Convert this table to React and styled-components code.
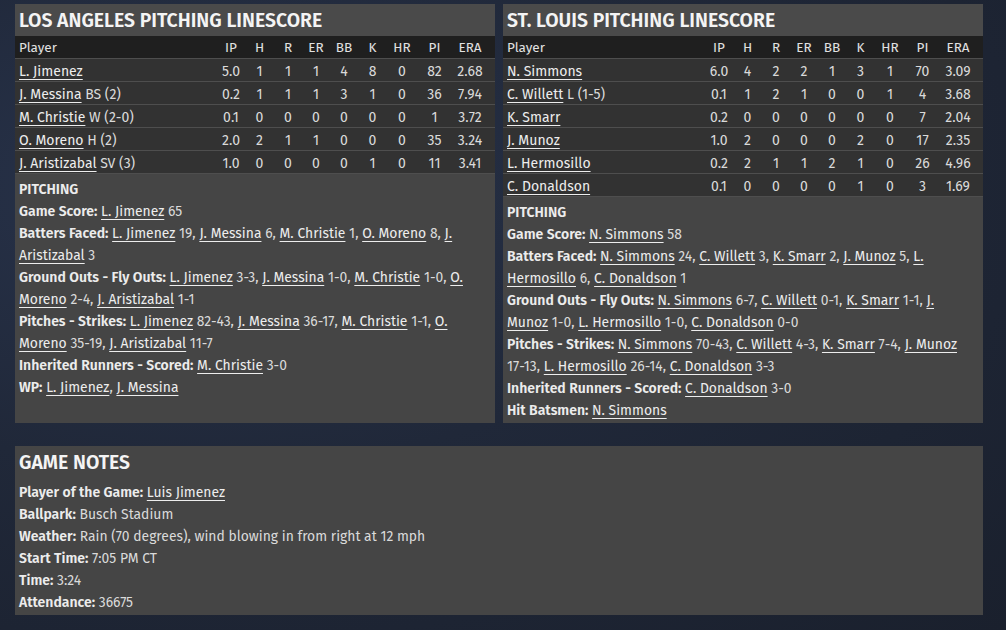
import React from "react";
import styled, { createGlobalStyle } from "styled-components";

const Global = createGlobalStyle`
  html, body { margin: 0; padding: 0; }
  body {
    width: 1006px;
    height: 630px;
    overflow: hidden;
    background: radial-gradient(ellipse at 20% 30%, #28334b 0%, #202839 45%, #1a202d 100%);
    font-family: "Fira Sans", "Open Sans", sans-serif;
    color: #dcdcdc;
  }
`;

const Page = styled.div`
  width: 968px;
  padding: 4px 0 0 15px;
  display: flex;
  flex-direction: column;
  gap: 23px;
`;

const TopRow = styled.div`
  display: grid;
  grid-template-columns: 480px 480px;
  gap: 8px;
  align-items: stretch;
`;

const Panel = styled.section`
  background: #454545;
  display: flex;
  flex-direction: column;
`;

const TitleBar = styled.h2`
  margin: 0;
  height: 32px;
  line-height: 34px;
  padding: 0 4px;
  background: #4a4a4a;
  color: #f4f4f4;
  font-size: 19.4px;
  font-weight: 600;
  text-transform: uppercase;
  white-space: nowrap;
`;

const cols = "1fr 28px 29px 28px 28px 28px 29px 30px 35px 36px";

const HeadRow = styled.div`
  display: grid;
  grid-template-columns: ${cols};
  padding: 0 7px 0 4px;
  height: 23px;
  line-height: 23px;
  background: #1f1f1f;
  font-size: 13.5px;
  color: #e2e2e2;
  border-bottom: 1px solid #4e4e4e;
  box-sizing: border-box;
`;

const Row = styled.div`
  display: grid;
  grid-template-columns: ${cols};
  padding: 1px 7px 0 4px;
  height: 23px;
  line-height: 23px;
  background: #323232;
  font-size: 14px;
  color: #dadada;
  border-bottom: 1px solid #4e4e4e;
  box-sizing: border-box;
  overflow: hidden;
`;

const Cell = styled.div`
  text-align: ${(p) => (p.$left ? "left" : "center")};
  white-space: nowrap;
`;

const Link = styled.span`
  color: #ededed;
  text-decoration: underline;
  text-underline-offset: 3px;
  text-decoration-thickness: 1px;
`;

const NoBreak = styled.span`
  white-space: nowrap;
`;

const Notes = styled.div`
  padding: ${(p) => p.$top || "5px"} 6px 1px 4px;
  font-size: 13.9px;
  line-height: 22px;
  color: #dadada;
`;

const SectionHead = styled.div`
  font-weight: 600;
  font-size: 14px;
  color: #ececec;
`;

const Line = styled.div``;

const Label = styled.span`
  font-weight: 600;
  font-size: 14px;
  color: #ececec;
`;

const GameNotesPanel = styled(Panel)`
  width: 968px;
`;

const NotesTitle = styled(TitleBar)`
  background: #454545;
`;

const headers = ["IP", "H", "R", "ER", "BB", "K", "HR", "PI", "ERA"];

function StatTable({ rows }) {
  return (
    <>
      <HeadRow>
        <Cell $left>Player</Cell>
        {headers.map((h) => (
          <Cell key={h}>{h}</Cell>
        ))}
      </HeadRow>
      {rows.map((r) => (
        <Row key={r.name}>
          <Cell $left>
            <Link>{r.name}</Link>
            {r.note ? " " + r.note : ""}
          </Cell>
          {r.stats.map((s, i) => (
            <Cell key={i}>{s}</Cell>
          ))}
        </Row>
      ))}
    </>
  );
}

// keeps scores such as "17-13" together on one line
function PlainText({ text }) {
  const bits = text.split(/(\d+-\d+)/);
  return bits.map((b, i) =>
    /^\d+-\d+$/.test(b) ? <NoBreak key={i}>{b}</NoBreak> : <React.Fragment key={i}>{b}</React.Fragment>
  );
}

function Parts({ parts }) {
  return parts.map((p, i) =>
    typeof p === "string" ? <PlainText key={i} text={p} /> : <Link key={i}>{p.l}</Link>
  );
}

function NoteLine({ label, parts }) {
  return (
    <Line>
      <Label>{label}:</Label> <Parts parts={parts} />
    </Line>
  );
}

const laRows = [
  { name: "L. Jimenez", stats: ["5.0", "1", "1", "1", "4", "8", "0", "82", "2.68"] },
  { name: "J. Messina", note: "BS (2)", stats: ["0.2", "1", "1", "1", "3", "1", "0", "36", "7.94"] },
  { name: "M. Christie", note: "W (2-0)", stats: ["0.1", "0", "0", "0", "0", "0", "0", "1", "3.72"] },
  { name: "O. Moreno", note: "H (2)", stats: ["2.0", "2", "1", "1", "0", "0", "0", "35", "3.24"] },
  { name: "J. Aristizabal", note: "SV (3)", stats: ["1.0", "0", "0", "0", "0", "1", "0", "11", "3.41"] },
];

const stlRows = [
  { name: "N. Simmons", stats: ["6.0", "4", "2", "2", "1", "3", "1", "70", "3.09"] },
  { name: "C. Willett", note: "L (1-5)", stats: ["0.1", "1", "2", "1", "0", "0", "1", "4", "3.68"] },
  { name: "K. Smarr", stats: ["0.2", "0", "0", "0", "0", "0", "0", "7", "2.04"] },
  { name: "J. Munoz", stats: ["1.0", "2", "0", "0", "0", "2", "0", "17", "2.35"] },
  { name: "L. Hermosillo", stats: ["0.2", "2", "1", "1", "2", "1", "0", "26", "4.96"] },
  { name: "C. Donaldson", stats: ["0.1", "0", "0", "0", "0", "1", "0", "3", "1.69"] },
];

const laNotes = [
  { label: "Game Score", parts: [{ l: "L. Jimenez" }, " 65"] },
  {
    label: "Batters Faced",
    parts: [
      { l: "L. Jimenez" }, " 19, ", { l: "J. Messina" }, " 6, ", { l: "M. Christie" }, " 1, ",
      { l: "O. Moreno" }, " 8, ", { l: "J. Aristizabal" }, " 3",
    ],
  },
  {
    label: "Ground Outs - Fly Outs",
    parts: [
      { l: "L. Jimenez" }, " 3-3, ", { l: "J. Messina" }, " 1-0, ", { l: "M. Christie" }, " 1-0, ",
      { l: "O. Moreno" }, " 2-4, ", { l: "J. Aristizabal" }, " 1-1",
    ],
  },
  {
    label: "Pitches - Strikes",
    parts: [
      { l: "L. Jimenez" }, " 82-43, ", { l: "J. Messina" }, " 36-17, ", { l: "M. Christie" }, " 1-1, ",
      { l: "O. Moreno" }, " 35-19, ", { l: "J. Aristizabal" }, " 11-7",
    ],
  },
  { label: "Inherited Runners - Scored", parts: [{ l: "M. Christie" }, " 3-0"] },
  { label: "WP", parts: [{ l: "L. Jimenez" }, ", ", { l: "J. Messina" }] },
];

const stlNotes = [
  { label: "Game Score", parts: [{ l: "N. Simmons" }, " 58"] },
  {
    label: "Batters Faced",
    parts: [
      { l: "N. Simmons" }, " 24, ", { l: "C. Willett" }, " 3, ", { l: "K. Smarr" }, " 2, ",
      { l: "J. Munoz" }, " 5, ", { l: "L. Hermosillo" }, " 6, ", { l: "C. Donaldson" }, " 1",
    ],
  },
  {
    label: "Ground Outs - Fly Outs",
    parts: [
      { l: "N. Simmons" }, " 6-7, ", { l: "C. Willett" }, " 0-1, ", { l: "K. Smarr" }, " 1-1, ",
      { l: "J. Munoz" }, " 1-0, ", { l: "L. Hermosillo" }, " 1-0, ", { l: "C. Donaldson" }, " 0-0",
    ],
  },
  {
    label: "Pitches - Strikes",
    parts: [
      { l: "N. Simmons" }, " 70-43, ", { l: "C. Willett" }, " 4-3, ", { l: "K. Smarr" }, " 7-4, ",
      { l: "J. Munoz" }, " 17-13, ", { l: "L. Hermosillo" }, " 26-14, ", { l: "C. Donaldson" }, " 3-3",
    ],
  },
  { label: "Inherited Runners - Scored", parts: [{ l: "C. Donaldson" }, " 3-0"] },
  { label: "Hit Batsmen", parts: [{ l: "N. Simmons" }] },
];

function TeamPanel({ title, rows, notes }) {
  return (
    <Panel>
      <TitleBar>{title}</TitleBar>
      <StatTable rows={rows} />
      <Notes>
        <SectionHead>PITCHING</SectionHead>
        {notes.map((n) => (
          <NoteLine key={n.label} label={n.label} parts={n.parts} />
        ))}
      </Notes>
    </Panel>
  );
}

export default function App() {
  return (
    <>
      <Global />
      <Page>
        <TopRow>
          <TeamPanel title="Los Angeles Pitching Linescore" rows={laRows} notes={laNotes} />
          <TeamPanel title="St. Louis Pitching Linescore" rows={stlRows} notes={stlNotes} />
        </TopRow>
        <GameNotesPanel>
          <NotesTitle>Game Notes</NotesTitle>
          <Notes $top="4px">
            <NoteLine label="Player of the Game" parts={[{ l: "Luis Jimenez" }]} />
            <NoteLine label="Ballpark" parts={["Busch Stadium"]} />
            <NoteLine label="Weather" parts={["Rain (70 degrees), wind blowing in from right at 12 mph"]} />
            <NoteLine label="Start Time" parts={["7:05 PM CT"]} />
            <NoteLine label="Time" parts={["3:24"]} />
            <NoteLine label="Attendance" parts={["36675"]} />
          </Notes>
        </GameNotesPanel>
      </Page>
    </>
  );
}
